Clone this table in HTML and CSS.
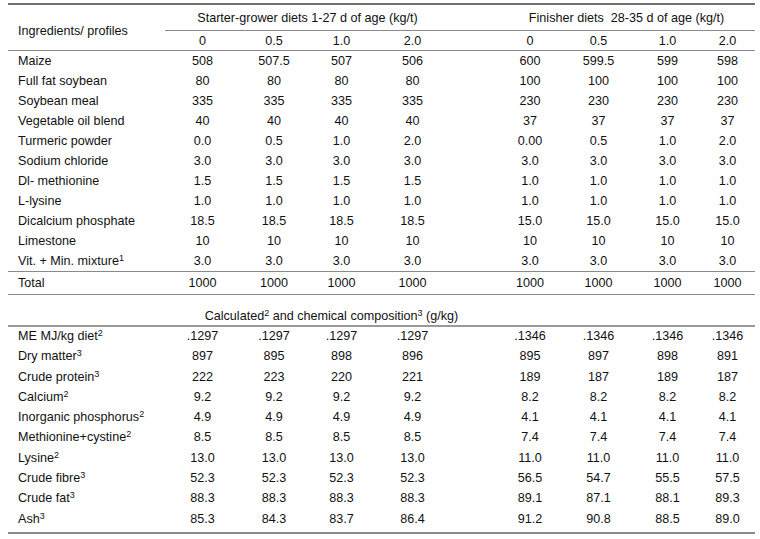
FILE: index.html
```html
<!DOCTYPE html>
<html>
<head>
<meta charset="utf-8">
<link rel="stylesheet" href="styles.css">
</head>
<body>
<table class="diet">
  <colgroup>
    <col class="c-label"><col class="c-a"><col class="c-b"><col class="c-c"><col class="c-d"><col class="c-gap"><col class="c-e"><col class="c-f"><col class="c-g"><col class="c-h">
  </colgroup>
  <thead>
    <tr class="h1">
      <th class="label" rowspan="2">Ingredients/ profiles</th>
      <th colspan="4" class="grp">Starter-grower diets 1-27 d of age (kg/t)</th>
      <th class="grp"></th>
      <th colspan="4" class="grp">Finisher diets&nbsp; 28-35 d of age (kg/t)</th>
    </tr>
    <tr class="h2">
      <th>0</th><th>0.5</th><th>1.0</th><th>2.0</th><th></th><th>0</th><th>0.5</th><th>1.0</th><th>2.0</th>
    </tr>
  </thead>
  <tbody class="ing">
    <tr><td class="label">Maize</td><td>508</td><td>507.5</td><td>507</td><td>506</td><td></td><td>600</td><td>599.5</td><td>599</td><td>598</td></tr>
    <tr><td class="label">Full fat soybean</td><td>80</td><td>80</td><td>80</td><td>80</td><td></td><td>100</td><td>100</td><td>100</td><td>100</td></tr>
    <tr><td class="label">Soybean meal</td><td>335</td><td>335</td><td>335</td><td>335</td><td></td><td>230</td><td>230</td><td>230</td><td>230</td></tr>
    <tr><td class="label">Vegetable oil blend</td><td>40</td><td>40</td><td>40</td><td>40</td><td></td><td>37</td><td>37</td><td>37</td><td>37</td></tr>
    <tr><td class="label">Turmeric powder</td><td>0.0</td><td>0.5</td><td>1.0</td><td>2.0</td><td></td><td>0.00</td><td>0.5</td><td>1.0</td><td>2.0</td></tr>
    <tr><td class="label">Sodium chloride</td><td>3.0</td><td>3.0</td><td>3.0</td><td>3.0</td><td></td><td>3.0</td><td>3.0</td><td>3.0</td><td>3.0</td></tr>
    <tr><td class="label">Dl- methionine</td><td>1.5</td><td>1.5</td><td>1.5</td><td>1.5</td><td></td><td>1.0</td><td>1.0</td><td>1.0</td><td>1.0</td></tr>
    <tr><td class="label">L-lysine</td><td>1.0</td><td>1.0</td><td>1.0</td><td>1.0</td><td></td><td>1.0</td><td>1.0</td><td>1.0</td><td>1.0</td></tr>
    <tr><td class="label">Dicalcium phosphate</td><td>18.5</td><td>18.5</td><td>18.5</td><td>18.5</td><td></td><td>15.0</td><td>15.0</td><td>15.0</td><td>15.0</td></tr>
    <tr><td class="label">Limestone</td><td>10</td><td>10</td><td>10</td><td>10</td><td></td><td>10</td><td>10</td><td>10</td><td>10</td></tr>
    <tr class="last"><td class="label">Vit. + Min. mixture<sup>1</sup></td><td>3.0</td><td>3.0</td><td>3.0</td><td>3.0</td><td></td><td>3.0</td><td>3.0</td><td>3.0</td><td>3.0</td></tr>
  </tbody>
  <tbody class="total">
    <tr><td class="label">Total</td><td>1000</td><td>1000</td><td>1000</td><td>1000</td><td></td><td>1000</td><td>1000</td><td>1000</td><td>1000</td></tr>
  </tbody>
  <tbody class="calc">
    <tr><td></td><td colspan="5" class="calc-title">Calculated<sup>2</sup> and chemical composition<sup>3</sup> (g/kg)</td><td></td><td></td><td></td><td></td></tr>
  </tbody>
  <tbody class="chem">
    <tr><td class="label">ME MJ/kg diet<sup>2</sup></td><td>.1297</td><td>.1297</td><td>.1297</td><td>.1297</td><td></td><td>.1346</td><td>.1346</td><td>.1346</td><td>.1346</td></tr>
    <tr><td class="label">Dry matter<sup>3</sup></td><td>897</td><td>895</td><td>898</td><td>896</td><td></td><td>895</td><td>897</td><td>898</td><td>891</td></tr>
    <tr><td class="label">Crude protein<sup>3</sup></td><td>222</td><td>223</td><td>220</td><td>221</td><td></td><td>189</td><td>187</td><td>189</td><td>187</td></tr>
    <tr><td class="label">Calcium<sup>2</sup></td><td>9.2</td><td>9.2</td><td>9.2</td><td>9.2</td><td></td><td>8.2</td><td>8.2</td><td>8.2</td><td>8.2</td></tr>
    <tr><td class="label">Inorganic phosphorus<sup>2</sup></td><td>4.9</td><td>4.9</td><td>4.9</td><td>4.9</td><td></td><td>4.1</td><td>4.1</td><td>4.1</td><td>4.1</td></tr>
    <tr><td class="label">Methionine+cystine<sup>2</sup></td><td>8.5</td><td>8.5</td><td>8.5</td><td>8.5</td><td></td><td>7.4</td><td>7.4</td><td>7.4</td><td>7.4</td></tr>
    <tr><td class="label">Lysine<sup>2</sup></td><td>13.0</td><td>13.0</td><td>13.0</td><td>13.0</td><td></td><td>11.0</td><td>11.0</td><td>11.0</td><td>11.0</td></tr>
    <tr><td class="label">Crude fibre<sup>3</sup></td><td>52.3</td><td>52.3</td><td>52.3</td><td>52.3</td><td></td><td>56.5</td><td>54.7</td><td>55.5</td><td>57.5</td></tr>
    <tr><td class="label">Crude fat<sup>3</sup></td><td>88.3</td><td>88.3</td><td>88.3</td><td>88.3</td><td></td><td>89.1</td><td>87.1</td><td>88.1</td><td>89.3</td></tr>
    <tr class="last"><td class="label">Ash<sup>3</sup></td><td>85.3</td><td>84.3</td><td>83.7</td><td>86.4</td><td></td><td>91.2</td><td>90.8</td><td>88.5</td><td>89.0</td></tr>
  </tbody>
</table>
</body>
</html>
```

FILE: styles.css
```css
html, body {
  margin: 0;
  padding: 0;
  background: #ffffff;
}

body {
  font-family: "Liberation Sans", Arial, sans-serif;
  font-size: 12.6px;
  color: #111111;
}

.diet {
  margin: 3px 0 0 8px;
  border-collapse: collapse;
  table-layout: fixed;
  width: 747px;
}

.c-label { width: 157px; }
.c-a { width: 75px; }
.c-b { width: 68px; }
.c-c { width: 67px; }
.c-d { width: 75px; }
.c-gap { width: 48px; }
.c-e { width: 64px; }
.c-f { width: 73px; }
.c-g { width: 65px; }
.c-h { width: 55px; }

.diet th,
.diet td {
  padding: 0;
  font-weight: normal;
  text-align: center;
  white-space: nowrap;
  line-height: 14px;
}

.diet .label {
  text-align: left;
  padding-left: 10px;
}

.diet sup {
  font-size: 9px;
  line-height: 0;
  vertical-align: 4px;
}

.h1 th {
  border-top: 2px solid #707070;
  height: 25px;
}

.h1 .grp {
  border-bottom: 1px solid #8a8a8a;
  vertical-align: middle;
}

.h1 .label {
  vertical-align: middle;
  padding-top: 6px;
  border-bottom: 1px solid #8a8a8a;
}

.h2 th {
  height: 19px;
  border-bottom: 1px solid #8a8a8a;
}

.ing td {
  height: 20px;
}

.ing tr.last td {
  border-bottom: 1px solid #8a8a8a;
}

.total td {
  height: 22px;
  border-bottom: 1px solid #8a8a8a;
}

.calc td {
  height: 28px;
  vertical-align: bottom;
  padding-bottom: 2px;
  border-bottom: 2px solid #9a9a9a;
}

.chem td {
  height: 18.3px;
  vertical-align: top;
  padding-top: 2px;
}

.chem tr.last td {
  height: 20px;
  border-bottom: 2px solid #8a8a8a;
}
```
